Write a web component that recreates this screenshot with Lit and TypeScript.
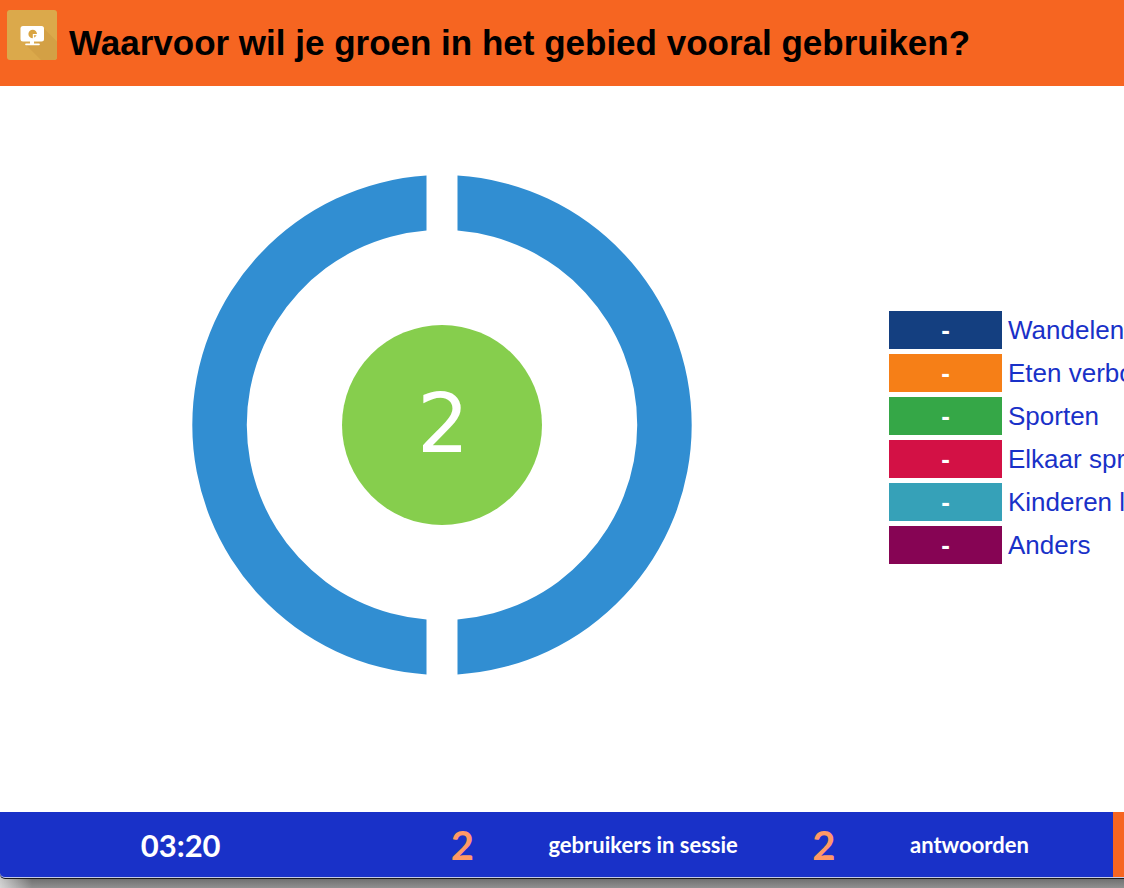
import { LitElement, html, css, svg } from "lit";
import { customElement, property } from "lit/decorators.js";
import { styleMap } from "lit/directives/style-map.js";

interface Answer {
  label: string;
  color: string;
  result: string;
}

@customElement("question-header")
class QuestionHeader extends LitElement {
  @property() question = "";

  static styles = css`
    .bar {
      display: flex;
      align-items: flex-start;
      gap: 12px;
      min-height: 86px;
      box-sizing: border-box;
      padding: 10px 7px;
      background: #f66521;
    }
    .icon {
      flex: none;
      width: 50px;
      height: 50px;
    }
    .title {
      margin: 0;
      padding-top: 13px;
      font: bold 35px/40px "Liberation Sans", Arial, sans-serif;
      color: #000;
    }
  `;

  render() {
    return html`<header class="bar">
      <svg class="icon" viewBox="0 0 50 50" aria-hidden="true">
        <rect width="50" height="50" rx="3" fill="#dba94b" />
        <path d="M36.500 18L50 31.500V47a3 3 0 0 1-3 3H34L19 35l12-3 5-2z" fill="#d3a045" />
        <rect x="13.500" y="16" width="23.500" height="15.500" rx="2.500" fill="#fff" />
        <path d="M23 31h4v2.500h5a.8.8 0 0 1 0 1.700H19a.8.8 0 0 1 0-1.700h4z" fill="#fff" />
        <path d="M25.800 24V28.300A4.300 4.300 0 1 1 30 24z" fill="#d9a441" />
        <path d="M26.800 25.200H29.600L27.500 27.700z" fill="#d9a441" />
      </svg>
      <h1 class="title">${this.question}</h1>
    </header>`;
  }
}

@customElement("response-ring")
class ResponseRing extends LitElement {
  @property({ type: Number }) count = 0;

  static styles = css`
    :host {
      display: block;
      width: 100%;
      max-width: 500px;
    }
    .ring {
      display: block;
      width: 100%;
    }
    .count {
      font: 82px "DejaVu Sans", Verdana, sans-serif;
      fill: #fff;
      text-anchor: middle;
    }
  `;

  render() {
    const half = svg`<path d="M265.500 0.500A250 250 0 0 1 265.500 499.500V444.400A195 195 0 0 0 265.500 55.600z" fill="#318ed2" />`;
    return html`<svg class="ring" viewBox="0 0 500 500" role="img" aria-label="${this.count}">
      ${half}
      <g transform="rotate(180 250 250)">${half}</g>
      <circle cx="250" cy="250" r="100" fill="#86ce4d" />
      <text class="count" x="251" y="277">${this.count}</text>
    </svg>`;
  }
}

@customElement("answer-legend")
class AnswerLegend extends LitElement {
  @property({ attribute: false }) answers: Answer[] = [];

  static styles = css`
    :host {
      display: block;
      min-width: 0;
      overflow: hidden;
    }
    .list {
      display: grid;
      gap: 5px;
      margin: 0;
      padding: 0;
      list-style: none;
      font: 26px/38px "Liberation Sans", Arial, sans-serif;
      color: #1931c8;
    }
    .row {
      display: flex;
      gap: 6px;
      white-space: nowrap;
    }
    .swatch {
      flex: none;
      width: 113px;
      color: #fff;
      font-weight: bold;
      text-align: center;
    }
  `;

  render() {
    return html`<ul class="list">
      ${this.answers.map(
        (a) => html`<li class="row">
          <span class="swatch" style=${styleMap({ background: a.color })}>${a.result}</span>
          <span>${a.label}</span>
        </li>`
      )}
    </ul>`;
  }
}

@customElement("session-footer")
class SessionFooter extends LitElement {
  @property() time = "";
  @property({ type: Number }) users = 0;
  @property({ type: Number }) replies = 0;

  static styles = css`
    :host {
      display: block;
      padding-bottom: 9px;
      background: linear-gradient(90deg, #ffffffa0, #ffffff00 32px),
        linear-gradient(#707070 88%, #909090);
    }
    .bar {
      display: flex;
      align-items: center;
      height: 67px;
      box-sizing: border-box;
      padding-bottom: 1px;
      border-bottom: 1px solid #1c1c1c;
      border-radius: 0 0 0 5px;
      background: linear-gradient(90deg, #1931c8 calc(100% - 11px), #f66521 0);
      box-shadow: inset 0 -1px #c5cbe8;
      font-family: Lato, sans-serif;
      font-weight: bold;
      color: #fff;
      white-space: nowrap;
    }
    .time {
      flex: 361 1 0;
      text-align: center;
      font-size: 31px;
      padding-right: 15px;
    }
    .number {
      flex: 172 1 0;
      text-align: center;
      font-size: 40px;
      color: #ff9966;
    }
    .caption {
      font-size: 22px;
    }
    .end {
      flex: 95 1 0;
    }
  `;

  render() {
    return html`<footer class="bar">
      <span class="time">${this.time}</span>
      <span class="number">${this.users}</span>
      <span class="caption">gebruikers in sessie</span>
      <span class="number">${this.replies}</span>
      <span class="caption">antwoorden</span>
      <span class="end"></span>
    </footer>`;
  }
}

@customElement("app-root")
class AppRoot extends LitElement {
  static styles = css`
    :host {
      display: flex;
      flex-direction: column;
      min-height: 100vh;
      background: #fff;
    }
    .content {
      flex: 1;
      display: grid;
      grid-template-columns: minmax(0, 884fr) minmax(0, 235fr);
      gap: 5px;
      align-items: center;
      padding-bottom: 48px;
    }
    .chart {
      display: flex;
      justify-content: center;
    }
    .legend {
      padding-top: 24px;
    }
  `;

  private answers: Answer[] = [
    { label: "Wandelen", color: "#143f80", result: "-" },
    { label: "Eten verbouwen", color: "#f67f17", result: "-" },
    { label: "Sporten", color: "#35a747", result: "-" },
    { label: "Elkaar spreken", color: "#d31145", result: "-" },
    { label: "Kinderen laten spelen", color: "#36a1b8", result: "-" },
    { label: "Anders", color: "#860454", result: "-" },
  ];

  render() {
    return html`
      <question-header question="Waarvoor wil je groen in het gebied vooral gebruiken?"></question-header>
      <main class="content">
        <div class="chart"><response-ring count="2"></response-ring></div>
        <answer-legend class="legend" .answers=${this.answers}></answer-legend>
      </main>
      <session-footer time="03:20" users="2" replies="2"></session-footer>
    `;
  }
}
